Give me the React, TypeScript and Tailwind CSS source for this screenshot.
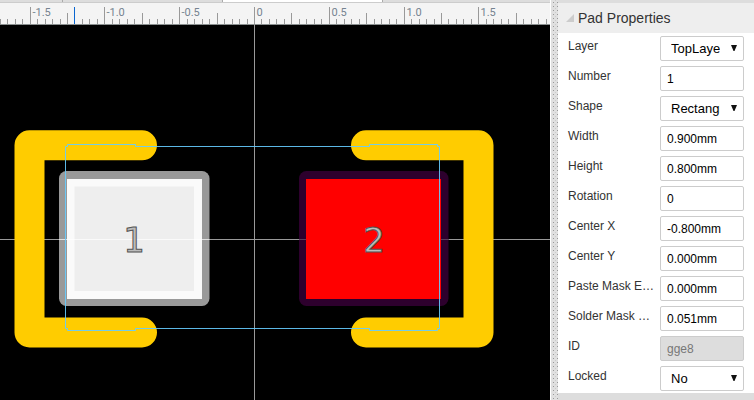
import type { ReactNode } from 'react';

const STEP = 7.48;
const ORIGIN = 254;

const ticks = Array.from({ length: 81 }, (_, i) => i - 40);
const majors = [
  { n: -30, label: '-1.5' },
  { n: -20, label: '-1.0' },
  { n: -10, label: '-0.5' },
  { n: 0, label: '0' },
  { n: 10, label: '0.5' },
  { n: 20, label: '1.0' },
  { n: 30, label: '1.5' },
];

const tickX = (n: number) => Math.round(ORIGIN + n * STEP) + 0.5;

function Ruler() {
  return (
    <svg className="block h-[22px] w-full border-b border-[#8a8f8f] bg-[#f4f4f4]" aria-label="Ruler">
      {ticks.map((n) => (
        <line key={n} x1={tickX(n)} x2={tickX(n)} y1={n % 10 === 0 ? 4 : n % 5 === 0 ? 10 : 16} y2={22} stroke="#999" />
      ))}
      {majors.map(({ n, label }) => (
        <text key={n} x={tickX(n) + 2} y={13} className="fill-[#758390] font-['Roboto',sans-serif] text-[11px]">
          {label}
        </text>
      ))}
      <line x1={74.5} x2={74.5} y1={4} y2={22} stroke="#0a66d0" />
    </svg>
  );
}

function Board() {
  return (
    <svg className="block min-h-0 w-full flex-1 bg-black" aria-label="Footprint canvas">
      <g transform="translate(0 -25)">
        <path d="M254.5 25V2000M0 239.5H2000" stroke="#999" fill="none" />
        <g fill="none" stroke="#ffcc00" strokeWidth="30" strokeLinecap="round" strokeLinejoin="round">
          <path d="M142 145.3H29.5V332.5H142" />
          <path d="M366 145.3H478.5V332.5H366" />
        </g>
        <rect x="59" y="171" width="150.5" height="135" rx="7.5" fill="#999" />
        <rect x="67" y="179" width="135" height="120" fill="#fafafa" />
        <rect x="74.5" y="186.5" width="119.5" height="104.5" fill="#eee" />
        <path d="M59 239.5H209.5" stroke="#fff" strokeOpacity="0.7" />
        <rect x="299" y="171" width="149.5" height="135" rx="7.5" fill="#2d002d" />
        <path d="M299 239.5H448.5" stroke="#5c405c" />
        <rect x="306" y="179" width="135" height="120" fill="#f00" />
        <path
          d="M65.5 146.5H67.5V144.5H135.5V146.5H369.5V144.5H437.5V146.5H439.5V328.5H437.5V330.5H369.5V328.5H135.5V330.5H67.5V328.5H65.5Z"
          fill="none"
          stroke="#66ccff"
          strokeOpacity="0.9"
        />
        <g className="fill-[#bbb] stroke-[#555] font-['DejaVu_Sans',sans-serif] text-[34px]" textAnchor="middle">
          <text x="134" y="252">1</text>
          <text x="374" y="252">2</text>
        </g>
      </g>
    </svg>
  );
}

const control = 'h-[25px] w-full rounded-[2px] border border-[#ccc] outline-none';

function Row({ id, label, children }: { id: string; label: string; children: ReactNode }) {
  return (
    <div className="flex h-[30px] items-start px-[10px]">
      <label htmlFor={id} className="w-[92px] shrink-0 pt-[5px] leading-4 whitespace-nowrap">
        {label}
      </label>
      <div className="relative min-w-0 flex-1 pt-[3px]">{children}</div>
    </div>
  );
}

function TextRow({ id, label, value, disabled }: { id: string; label: string; value: string; disabled?: boolean }) {
  return (
    <Row id={id} label={label}>
      <input
        id={id}
        defaultValue={value}
        disabled={disabled}
        className={`${control} block pl-[6px] text-black disabled:bg-[#ddd] disabled:text-[#777]`}
      />
    </Row>
  );
}

function SelectRow({ id, label, options }: { id: string; label: string; options: string[] }) {
  return (
    <Row id={id} label={label}>
      <select id={id} className={`${control} block appearance-none bg-white pr-[23px] pl-[10px] text-[13px] text-black`}>
        {options.map((o) => (
          <option key={o}>{o}</option>
        ))}
      </select>
      <svg className="pointer-events-none absolute top-[12px] right-[7px] h-[6px] w-[6px]" viewBox="0 0 6 6" aria-hidden="true">
        <path d="M0 0H6L3.5 6H2.5Z" fill="#111" />
      </svg>
    </Row>
  );
}

function Splitter() {
  return (
    <svg className="h-full w-2 shrink-0 border-l border-white bg-[#e0e0e0]" aria-hidden="true">
      <defs>
        <pattern id="grip" width="7" height="4" patternUnits="userSpaceOnUse">
          <rect x="2" y="2" width="1" height="1" fill="#999" />
          <rect x="6" y="2" width="1" height="1" fill="#999" />
          <rect x="4" y="0" width="1" height="1" fill="#ccc" />
        </pattern>
      </defs>
      <rect width="7" height="100%" fill="url(#grip)" />
    </svg>
  );
}

export default function App() {
  return (
    <div className="flex h-screen overflow-hidden bg-[#ddd] font-['Liberation_Sans',Arial,sans-serif] text-[12px] text-[#333]">
      <main className="flex min-w-0 flex-1 flex-col">
        <div className="flex h-[3px] border-b border-[#ccc]">
          <div className="w-[63px] border-r border-[#aaa]" />
          <div className="w-[160px] border-r border-[#aaa]" />
          <div className="w-[160px] border-r border-[#aaa] bg-white" />
        </div>
        <Ruler />
        <Board />
      </main>
      <Splitter />
      <aside className="w-[196px] shrink-0 pt-[3px]">
        <h2 className="flex h-[30px] items-center bg-[#eee] pl-2 text-[14px]">
          <svg className="mr-1 h-2 w-2" viewBox="0 0 8 8" aria-hidden="true">
            <path d="M8 0V8H0Z" fill="#ccc" />
          </svg>
          Pad Properties
        </h2>
        <form className="bg-white">
          <SelectRow id="layer" label="Layer" options={['TopLayer', 'BottomLayer', 'Multi-Layer']} />
          <TextRow id="number" label="Number" value="1" />
          <SelectRow id="shape" label="Shape" options={['Rectangle', 'Round', 'Oval', 'Polygon']} />
          <TextRow id="width" label="Width" value="0.900mm" />
          <TextRow id="height" label="Height" value="0.800mm" />
          <TextRow id="rotation" label="Rotation" value="0" />
          <TextRow id="center-x" label="Center X" value="-0.800mm" />
          <TextRow id="center-y" label="Center Y" value="0.000mm" />
          <TextRow id="paste-mask" label="Paste Mask E…" value="0.000mm" />
          <TextRow id="solder-mask" label="Solder Mask …" value="0.051mm" />
          <TextRow id="gge" label="ID" value="gge8" disabled />
          <SelectRow id="locked" label="Locked" options={['No', 'Yes']} />
        </form>
      </aside>
    </div>
  );
}
